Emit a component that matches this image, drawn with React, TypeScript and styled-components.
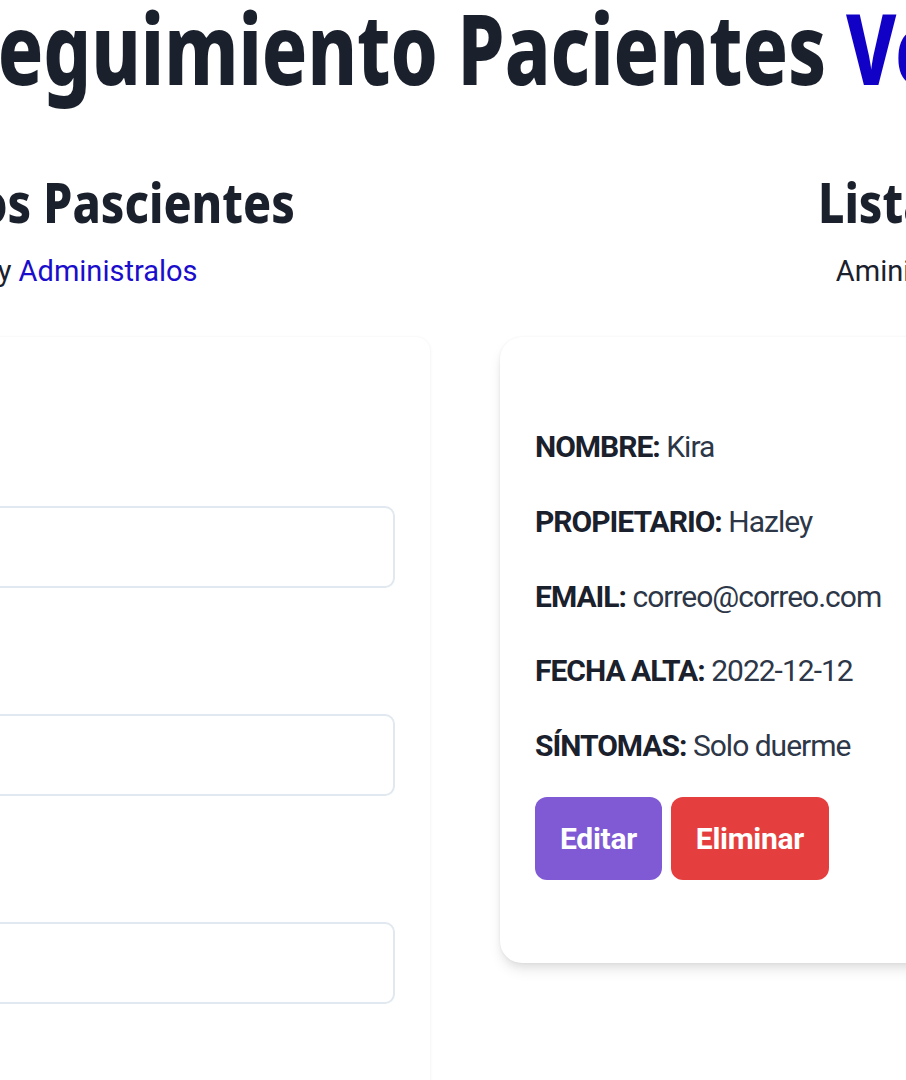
import React from "react";
import styled, { createGlobalStyle, css } from "styled-components";

const GlobalStyle = createGlobalStyle`
  html, body {
    margin: 0;
    padding: 0;
    background: #ffffff;
    overflow: hidden;
  }
  body {
    font-family: Roboto, "Liberation Sans", Arial, sans-serif;
    color: #1a202c;
  }
  * { box-sizing: border-box; }
`;

const Viewport = styled.div`
  width: 906px;
  height: 1080px;
  overflow: hidden;
  background: #ffffff;
`;

const Stage = styled.div`
  width: 2046px;
  margin-left: -474px;
`;

const Header = styled.header`
  padding-left: 134px;
`;

const headingFont = css`
  font-family: "Noto Sans", "Open Sans", "DejaVu Sans", sans-serif;
  font-weight: 800;
  color: #1a202c;
  white-space: nowrap;
  text-align: center;
  margin: 0;
`;

const Title = styled.h1`
  ${headingFont};
  font-size: 99px;
  line-height: 93px;
  transform: scaleX(0.76);
`;

const Accent = styled.span`
  color: #1100c6;
`;

const Columns = styled.main`
  display: flex;
  align-items: flex-start;
  gap: 70px;
  margin-top: 78px;
`;

const Column = styled.section<{ $width: number }>`
  flex: none;
  width: ${(p) => p.$width}px;
  display: flex;
  flex-direction: column;
`;

const SectionTitle = styled.h2`
  ${headingFont};
  font-size: 56px;
  line-height: 60px;
  transform: scaleX(0.83);
`;

const SectionLead = styled.p`
  margin: 23px 0 0;
  font-size: 29px;
  line-height: 34px;
  text-align: center;
  white-space: nowrap;
  color: #1a202c;
`;

const LeadAccent = styled.span`
  color: #1a0dcc;
`;

const FormCard = styled.form`
  margin-top: 49px;
  background: #ffffff;
  border-radius: 14px;
  box-shadow: 0 1px 4px rgba(0, 0, 0, 0.05), 0 0 2px rgba(0, 0, 0, 0.04);
  padding: 119px 35px 60px;
  display: flex;
  flex-direction: column;
  gap: 76px;
`;

const Field = styled.div`
  display: flex;
  flex-direction: column;
  gap: 16px;
`;

const Label = styled.label`
  font-size: 29px;
  line-height: 34px;
  font-weight: 500;
  color: #1a202c;
`;

const Input = styled.input`
  height: 82px;
  width: 100%;
  border: 2px solid #e2e8f0;
  border-radius: 10px;
  background: #ffffff;
  padding: 0 28px;
  font-family: Roboto, "Liberation Sans", sans-serif;
  font-size: 29px;
  color: #1a202c;
  outline: none;
`;

const PatientCard = styled.article`
  margin-top: 49px;
  background: #ffffff;
  border-radius: 22px;
  box-shadow: 0 8px 14px -2px rgba(0, 0, 0, 0.1), 0 4px 8px -2px rgba(0, 0, 0, 0.06),
    0 0 3px rgba(0, 0, 0, 0.05);
  padding: 92px 35px 83px;
  display: flex;
  flex-direction: column;
`;

const InfoList = styled.div`
  display: flex;
  flex-direction: column;
  gap: 38.75px;
`;

const InfoLine = styled.p`
  margin: 0;
  font-size: 30px;
  line-height: 36px;
  letter-spacing: -1px;
  color: #2d3748;
  white-space: nowrap;
`;

const InfoKey = styled.span`
  font-weight: 700;
  color: #1a202c;
`;

const Actions = styled.div`
  display: flex;
  gap: 9px;
  margin-top: 33px;
`;

const ActionButton = styled.button<{ $tone: "purple" | "red" }>`
  height: 83px;
  padding: 0 25px;
  border: none;
  border-radius: 12px;
  font-family: Roboto, "Liberation Sans", sans-serif;
  font-size: 30px;
  font-weight: 700;
  letter-spacing: -0.3px;
  color: #ffffff;
  background: ${(p) => (p.$tone === "purple" ? "#805ad5" : "#e53e3e")};
  cursor: pointer;
`;

const fields = [
  { id: "mascota", label: "Nombre Mascota" },
  { id: "propietario", label: "Nombre Propietario" },
  { id: "email", label: "Email" },
  { id: "alta", label: "Alta" },
];

const info: [string, string][] = [
  ["NOMBRE:", "Kira"],
  ["PROPIETARIO:", "Hazley"],
  ["EMAIL:", "correo@correo.com"],
  ["FECHA ALTA:", "2022-12-12"],
  ["SÍNTOMAS:", "Solo duerme"],
];

export default function App() {
  return (
    <>
      <GlobalStyle />
      <Viewport>
        <Stage>
          <Header>
            <Title>
              Seguimiento Pacientes <Accent>Veterinaria</Accent>
            </Title>
          </Header>
          <Columns>
            <Column $width={904}>
              <SectionTitle>Registros de los Pascientes</SectionTitle>
              <SectionLead>
                Añade Pascientes y <LeadAccent>Administralos</LeadAccent>
              </SectionLead>
              <FormCard onSubmit={(e) => e.preventDefault()}>
                {fields.map((f) => (
                  <Field key={f.id}>
                    <Label htmlFor={f.id}>{f.label}</Label>
                    <Input id={f.id} type="text" />
                  </Field>
                ))}
              </FormCard>
            </Column>
            <Column $width={1072}>
              <SectionTitle>Listado Pascientes</SectionTitle>
              <SectionLead>Aministra tus Pacientes y Citas</SectionLead>
              <PatientCard>
                <InfoList>
                  {info.map(([k, v]) => (
                    <InfoLine key={k}>
                      <InfoKey>{k}</InfoKey> {v}
                    </InfoLine>
                  ))}
                </InfoList>
                <Actions>
                  <ActionButton type="button" $tone="purple">
                    Editar
                  </ActionButton>
                  <ActionButton type="button" $tone="red">
                    Eliminar
                  </ActionButton>
                </Actions>
              </PatientCard>
            </Column>
          </Columns>
        </Stage>
      </Viewport>
    </>
  );
}
